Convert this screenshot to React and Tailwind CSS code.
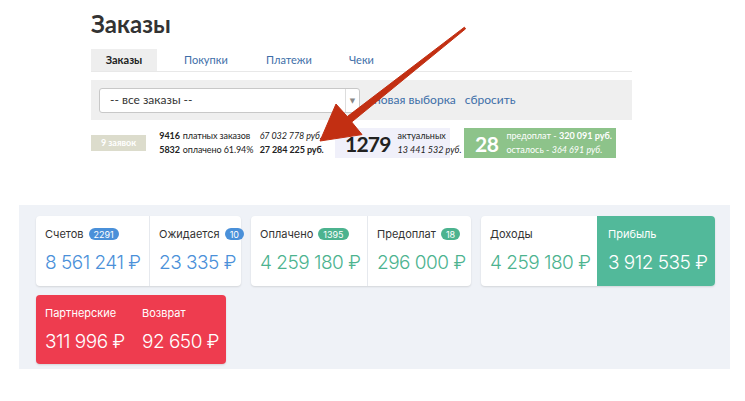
import React from "react";

const top = { fontFamily: "Lato, 'Open Sans', 'DejaVu Sans', sans-serif" };
const ui = { fontFamily: "Inter, Roboto, 'DejaVu Sans', sans-serif" };

function Badge({ children, color }) {
  return (
    <span className={`ml-[5px] inline-flex h-[12px] items-center rounded-full px-[5px] text-[9px] leading-none text-white ${color}`}>
      {children}
    </span>
  );
}

function Cell({ label, badge, badgeColor, value, valueColor, width, className = "" }) {
  return (
    <div className={`flex flex-col pl-[9px] pt-[11px] ${className}`} style={{ width }}>
      <div className="flex h-[14px] items-center text-[11px] text-[#333]">
        {label}
        {badge && <Badge color={badgeColor}>{badge}</Badge>}
      </div>
      <div className={`mt-[10px] text-[19px] font-light leading-[24px] tracking-[-0.5px] whitespace-nowrap ${valueColor}`}>{value}</div>
    </div>
  );
}

function Arrow() {
  return (
    <svg className="pointer-events-none absolute left-0 top-0" width="745" height="401">
      <polygon
        points="464.4,27.2 347.3,116.6 336,104 320,141 362,134.6 351.7,122 465.6,28.8"
        fill="#c22f12"
        stroke="#c22f12"
        strokeWidth="1"
        strokeLinejoin="round"
      />
    </svg>
  );
}

export default function App() {
  return (
    <div className="relative h-[401px] w-[745px] overflow-hidden bg-white">
      <div className="ml-[91px] w-[541px]" style={top}>
        <h1 className="pt-[10px] text-[24px] font-bold leading-[28px] text-[#333]">Заказы</h1>

        <div className="mt-[11px] flex h-[23px] border-b border-[#e8e8e8] text-[11px]">
          <div className="flex h-[22px] w-[66px] items-center justify-center bg-[#eeeeee] font-bold text-[#222]">Заказы</div>
          <div className="flex w-[93px] items-center pl-[27px] text-[#3d6ea8]">Покупки</div>
          <div className="flex w-[83px] items-center pl-[16px] text-[#3d6ea8]">Платежи</div>
          <div className="flex items-center pl-[16px] text-[#3d6ea8]">Чеки</div>
        </div>

        <div className="mt-[8px] flex h-[40px] items-center bg-[#efefef] pl-[8px]">
          <div className="flex h-[25px] w-[261px] items-center rounded-[3px] border border-[#c8c8c8] bg-white">
            <span className="flex-1 pl-[10px] text-[12px] text-[#333]">-- все заказы --</span>
            <span className="flex h-full w-[14px] items-center justify-center border-l border-[#ddd] text-[7px] text-[#888]">▼</span>
          </div>
          <span className="ml-[14px] text-[12px] text-[#3d6ea8]">новая выборка</span>
          <span className="ml-[9px] text-[12px] text-[#3d6ea8]">сбросить</span>
        </div>

        <div className="mt-[8px] flex h-[30px] items-center">
          <div className="flex h-[16px] w-[55px] items-center justify-center bg-[#dcdccc] text-[9px] font-bold text-white">9 заявок</div>
          <div className="ml-[10px] grid w-[171px] grid-cols-[auto_auto_auto] gap-x-[3px] whitespace-nowrap text-[9px] leading-[14px] tracking-[-0.1px] text-[#222]">
            <span className="text-right font-bold">9416</span>
            <span>платных заказов</span>
            <span className="italic">67 032 778 руб.</span>
            <span className="text-right font-bold">5832</span>
            <span>оплачено 61.94%</span>
            <span className="font-bold">27 284 225 руб.</span>
          </div>
          <div className="ml-[8px] flex h-[30px] w-[115px] items-center bg-[#f0f0fa] pl-[10px]">
            <span className="text-[21px] font-bold leading-none tracking-[-0.8px] text-[#222]">1279</span>
            <div className="ml-[7px] whitespace-nowrap text-[9px] leading-[14px] text-[#222]">
              <div>актуальных</div>
              <div className="italic">13 441 532 руб.</div>
            </div>
          </div>
          <div className="ml-[14px] flex h-[30px] w-[152px] items-center bg-[#8dc38a] pl-[11px] text-white">
            <span className="text-[21px] font-bold leading-none tracking-[-0.5px]">28</span>
            <div className="ml-[8px] whitespace-nowrap text-[9px] leading-[14px]">
              <div>предоплат - <b>320 091 руб.</b></div>
              <div>осталось - <i>364 691 руб.</i></div>
            </div>
          </div>
        </div>
      </div>

      <div className="ml-[19px] mt-[47px] w-[711px] bg-[#eff2f7] pb-[5px] pl-[17px] pt-[11px]" style={ui}>
        <div className="flex gap-[10px]">
          <div className="flex h-[70px] rounded-[4px] bg-white shadow-[0_1px_2px_rgba(0,0,0,0.12)]">
            <Cell width={113} label="Счетов" badge="2291" badgeColor="bg-[#4a90d9]" value="8 561 241 ₽" valueColor="text-[#4a90d9]" />
            <Cell width={92} className="border-l border-[#e6e9ee]" label="Ожидается" badge="10" badgeColor="bg-[#4a90d9]" value="23 335 ₽" valueColor="text-[#4a90d9]" />
          </div>
          <div className="flex h-[70px] rounded-[4px] bg-white shadow-[0_1px_2px_rgba(0,0,0,0.12)]">
            <Cell width={116} label="Оплачено" badge="1395" badgeColor="bg-[#4cb38f]" value="4 259 180 ₽" valueColor="text-[#4cb38f]" />
            <Cell width={104} className="border-l border-[#e6e9ee]" label="Предоплат" badge="18" badgeColor="bg-[#4cb38f]" value="296 000 ₽" valueColor="text-[#4cb38f]" />
          </div>
          <div className="flex h-[70px] overflow-hidden rounded-[4px] bg-white shadow-[0_1px_2px_rgba(0,0,0,0.12)]">
            <Cell width={116} label="Доходы" value="4 259 180 ₽" valueColor="text-[#4cb38f]" />
            <div className="flex w-[118px] flex-col bg-[#52b99a] pl-[11px] pt-[11px] text-white">
              <div className="flex h-[14px] items-center text-[11px]">Прибыль</div>
              <div className="mt-[10px] text-[19px] font-light leading-[24px] tracking-[-0.5px] whitespace-nowrap">3 912 535 ₽</div>
            </div>
          </div>
        </div>
        <div className="mt-[9px] flex h-[69px] w-[190px] rounded-[4px] bg-[#ee3c4f] text-white shadow-[0_1px_2px_rgba(0,0,0,0.12)]">
          <div className="flex w-[106px] flex-col pl-[9px] pt-[11px]">
            <div className="flex h-[14px] items-center text-[11px]">Партнерские</div>
            <div className="mt-[10px] text-[19px] font-light leading-[24px] tracking-[-0.5px] whitespace-nowrap">311 996 ₽</div>
          </div>
          <div className="flex flex-col pt-[11px]">
            <div className="flex h-[14px] items-center text-[11px]">Возврат</div>
            <div className="mt-[10px] text-[19px] font-light leading-[24px] tracking-[-0.5px] whitespace-nowrap">92 650 ₽</div>
          </div>
        </div>
      </div>

      <Arrow />
    </div>
  );
}
